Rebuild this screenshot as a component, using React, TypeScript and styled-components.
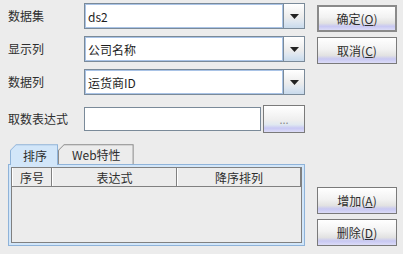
import React from 'react';
import styled, { createGlobalStyle } from 'styled-components';

const GlobalStyle = createGlobalStyle`
  html, body {
    margin: 0;
    padding: 0;
    background: #ececec;
  }
  body {
    font-family: "Noto Sans CJK SC", "DejaVu Sans", sans-serif;
    font-size: 12px;
    color: #2e2e2e;
  }
`;

const fields = [
  { label: '数据集', value: 'ds2' },
  { label: '显示列', value: '公司名称' },
  { label: '数据列', value: '运货商ID' },
];

const columns = [
  { title: '序号', width: 40 },
  { title: '表达式', width: 125 },
  { title: '降序排列', width: 122 },
];

export default function App() {
  return (
    <>
      <GlobalStyle />
      <Dialog>
        <Main>
          {fields.map((f) => (
            <Row key={f.label}>
              <Label>{f.label}</Label>
              <Combo>
                <ComboField>{f.value}</ComboField>
                <ArrowButton>
                  <svg width="9" height="5" viewBox="0 0 9 5">
                    <path d="M0 0 H9 L4.5 5 Z" fill="#222" />
                  </svg>
                </ArrowButton>
              </Combo>
            </Row>
          ))}
          <ExprRow>
            <Label>取数表达式</Label>
            <TextInput />
            <BrowseButton>...</BrowseButton>
          </ExprRow>

          <TabStrip>
            <Tab $active>
              <TabInner $active>排序</TabInner>
            </Tab>
            <Tab>
              <TabInner>Web特性</TabInner>
            </Tab>
          </TabStrip>
          <Panel>
            <Table>
              <HeaderRow>
                {columns.map((c) => (
                  <HeaderCell key={c.title} $width={c.width}>
                    {c.title}
                  </HeaderCell>
                ))}
              </HeaderRow>
            </Table>
          </Panel>
        </Main>

        <Side>
          <Button $default>
            确定(<u>O</u>)
          </Button>
          <Button>
            取消(<u>C</u>)
          </Button>
          <Spacer />
          <Button>
            增加(<u>A</u>)
          </Button>
          <Button>
            删除(<u>D</u>)
          </Button>
        </Side>
      </Dialog>
    </>
  );
}

const Dialog = styled.div`
  display: flex;
  gap: 12px;
  width: 403px;
  height: 254px;
  box-sizing: border-box;
  padding: 3px 6px 8px 8px;
`;

const Main = styled.div`
  display: flex;
  flex-direction: column;
  width: 297px;
`;

const Row = styled.div`
  display: flex;
  align-items: center;
  height: 26px;
  margin-bottom: 7px;
`;

const Label = styled.div`
  width: 76px;
  flex-shrink: 0;
  line-height: 14px;
`;

const Combo = styled.div`
  display: flex;
  flex: 1;
  height: 26px;
`;

const ComboField = styled.div`
  flex: 1;
  display: flex;
  align-items: center;
  padding-left: 3px;
  background: #fff;
  border: 1px solid #7a8a99;
  box-shadow: inset 1px 1px 0 #a9c3e6, inset -1px -1px 0 #a9c3e6;
  font-size: 12px;
  color: #1e1e1e;
`;

const ArrowButton = styled.div`
  width: 20px;
  display: flex;
  align-items: center;
  justify-content: center;
  border: 1px solid #7a8a99;
  border-left: none;
  background: linear-gradient(#ffffff 0%, #ececec 55%, #dde6f0 75%, #c8daec 100%);
`;

const ExprRow = styled.div`
  display: flex;
  align-items: center;
  height: 28px;
  margin-top: 3px;
`;

const TextInput = styled.div`
  width: 175px;
  height: 22px;
  background: #fff;
  border: 1px solid #7a8a99;
  margin-right: 2px;
`;

const BrowseButton = styled.div`
  width: 40px;
  height: 26px;
  display: flex;
  align-items: center;
  justify-content: center;
  border: 1px solid #7a7a7a;
  background: linear-gradient(#ffffff 0%, #eeeeee 55%, #e0e8f0 72%, #c8c8f4 85%, #dcdcf6 100%);
  color: #888;
  font-size: 11px;
`;

const TabStrip = styled.div`
  display: flex;
  align-items: flex-end;
  height: 21px;
  margin-top: 11px;
  padding-left: 2px;
`;

const Tab = styled.div<{ $active?: boolean }>`
  height: ${(p) => (p.$active ? 21 : 20)}px;
  padding: 1px 1px 0 1px;
  box-sizing: border-box;
  background: ${(p) => (p.$active ? '#8fb3d9' : '#8a8a8a')};
  clip-path: polygon(6px 0, 100% 0, 100% 100%, 0 100%, 0 6px);
  margin-bottom: ${(p) => (p.$active ? -1 : 0)}px;
  position: relative;
  z-index: ${(p) => (p.$active ? 1 : 0)};
`;

const TabInner = styled.div<{ $active?: boolean }>`
  height: 100%;
  display: flex;
  align-items: center;
  justify-content: center;
  padding: 0 ${(p) => (p.$active ? 10 : 12)}px 0 ${(p) => (p.$active ? 12 : 13)}px;
  background: ${(p) => (p.$active ? '#d2e6f9' : '#ececec')};
  clip-path: polygon(5px 0, 100% 0, 100% 100%, 0 100%, 0 5px);
  font-size: 12px;
`;

const Panel = styled.div`
  height: 85px;
  box-sizing: border-box;
  border: 1px solid #8fb3d9;
  padding: 2px;
  background: #d2e6f9;
  display: flex;
`;

const Table = styled.div`
  flex: 1;
  border: 1px solid #808080;
  background: #ececec;
  box-sizing: border-box;
`;

const HeaderRow = styled.div`
  display: flex;
  height: 18px;
  border-bottom: 1px solid #808080;
`;

const HeaderCell = styled.div<{ $width: number }>`
  width: ${(p) => p.$width}px;
  flex-shrink: 0;
  box-sizing: border-box;
  display: flex;
  align-items: center;
  justify-content: center;
  border-left: 1px solid #fff;
  border-right: 1px solid #808080;
  font-size: 12px;
  &:last-child {
    flex: 1;
  }
`;

const Side = styled.div`
  display: flex;
  flex-direction: column;
  gap: 5px;
  width: 80px;
  padding-top: 2px;
`;

const Spacer = styled.div`
  flex: 1;
`;

const Button = styled.div<{ $default?: boolean }>`
  height: 27px;
  box-sizing: border-box;
  display: flex;
  align-items: center;
  justify-content: center;
  border: ${(p) => (p.$default ? '2px solid #8a8a8a' : '1px solid #7a7a7a')};
  background: linear-gradient(#ffffff 0%, #f2f2f2 45%, #e2e2e2 70%, #c8c8f2 84%, #dcdcf7 100%);
  font-size: 12px;
  u {
    text-underline-offset: 1px;
  }
`;
